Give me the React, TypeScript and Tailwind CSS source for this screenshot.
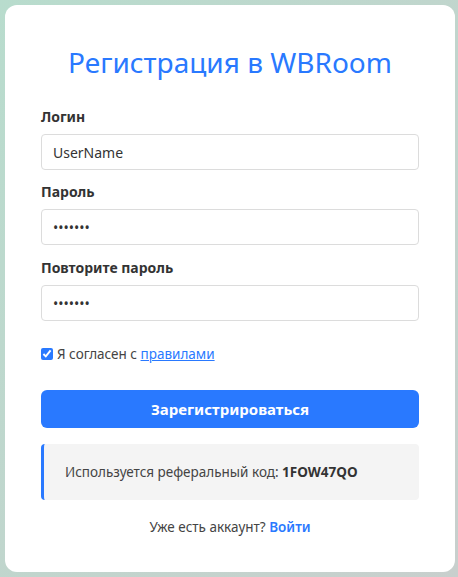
export default function App() {
  return (
    <main
      className="min-h-[577px] w-full bg-gradient-to-br from-[#b8dccd] to-[#c8cfcd] pt-[5px] pl-[5px] pr-[3px] pb-[5px] flex"
      style={{ fontFamily: '"Noto Sans", "Open Sans", sans-serif' }}
    >
      <div className="flex-1 bg-white rounded-[12px] px-[36px] pt-[40px] pb-[34px]">
        <h1 className="text-center text-[28px] leading-[34px] text-[#2979ff] mb-[28px]">
          Регистрация в WBRoom
        </h1>

        <form className="flex flex-col">
          <label className="text-[14px] leading-[20px] font-bold text-[#333] mb-[7px]">Логин</label>
          <input
            defaultValue="UserName"
            className="h-[36px] border border-[#dcdcdc] rounded-[4px] px-[11px] text-[14px] text-[#333] outline-none mb-[12px]"
          />

          <label className="text-[14px] leading-[20px] font-bold text-[#333] mb-[7px]">Пароль</label>
          <input
            type="password"
            defaultValue="1234567"
            className="h-[36px] border border-[#dcdcdc] rounded-[4px] px-[11px] text-[14px] text-[#333] outline-none mb-[13px]"
          />

          <label className="text-[14px] leading-[20px] font-bold text-[#333] mb-[7px]">Повторите пароль</label>
          <input
            type="password"
            defaultValue="1234567"
            className="h-[36px] border border-[#dcdcdc] rounded-[4px] px-[11px] text-[14px] text-[#333] outline-none"
          />

          <label className="flex items-center gap-[4px] mt-[23px] text-[13.5px] leading-[20px] text-[#444]">
            <input type="checkbox" defaultChecked className="w-[12px] h-[12px] accent-[#2979ff]" />
            <span>
              Я согласен с{' '}
              <a href="#" className="text-[#2979ff] underline">правилами</a>
            </span>
          </label>

          <button
            type="button"
            className="mt-[26px] h-[38px] rounded-[6px] bg-[#2979ff] text-white font-bold text-[15px]"
          >
            Зарегистрироваться
          </button>

          <div className="mt-[16px] h-[56px] flex items-center bg-[#f4f4f4] border-l-[3px] border-[#2979ff] rounded-[4px] pl-[21px] text-[13.5px] text-[#444]">
            Используется реферальный код:&nbsp;<b className="text-[#333]">1FOW47QO</b>
          </div>

          <p className="mt-[17px] text-center text-[13.5px] leading-[20px] text-[#444]">
            Уже есть аккаунт?{' '}
            <a href="#" className="text-[#2979ff] font-semibold">Войти</a>
          </p>
        </form>
      </div>
    </main>
  );
}
